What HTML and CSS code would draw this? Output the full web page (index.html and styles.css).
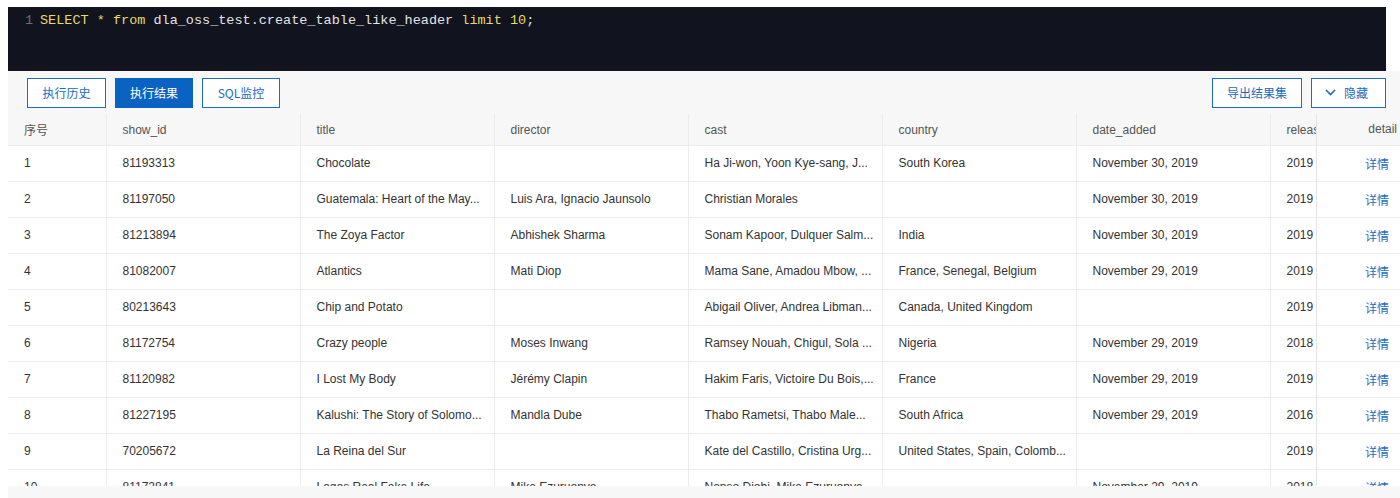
FILE: index.html
```html
<!DOCTYPE html>
<html>
<head>
<meta charset="utf-8">
<link rel="stylesheet" href="styles.css">
</head>
<body>
<div class="wrap">
  <div class="editor">
    <div class="line"><span class="ln">1</span><span class="kw">SELECT</span> <span class="kw">*</span> <span class="kw">from</span> dla_oss_test.create_table_like_header <span class="kw">limit</span> <span class="num">10</span>;</div>
  </div>
  <div class="panel">
    <div class="toolbar">
      <div class="tabs">
        <button class="btn w79">执行历史</button>
        <button class="btn w78 primary">执行结果</button>
        <button class="btn w78">SQL监控</button>
      </div>
      <div class="actions">
        <button class="btn w90">导出结果集</button>
        <button class="btn w75"><svg class="chev" width="11" height="7" viewBox="0 0 11 7"><path d="M1 1l4.5 4.5L10 1" fill="none" stroke="#1b6cc4" stroke-width="1.6"/></svg>隐藏</button>
      </div>
    </div>
    <div class="tablebox">
      <table class="grid">
        <colgroup>
          <col class="c-idx"><col class="c-w"><col class="c-w"><col class="c-w"><col class="c-w"><col class="c-w"><col class="c-w"><col class="c-rel"><col class="c-det">
        </colgroup>
        <thead>
          <tr><th>序号</th><th>show_id</th><th>title</th><th>director</th><th>cast</th><th>country</th><th>date_added</th><th class="rel">releas</th><th class="det">detail</th></tr>
        </thead>
        <tbody>
          <tr><td>1</td><td>81193313</td><td>Chocolate</td><td></td><td>Ha Ji-won, Yoon Kye-sang, J...</td><td>South Korea</td><td>November 30, 2019</td><td class="rel">2019</td><td class="det"><a>详情</a></td></tr>
          <tr><td>2</td><td>81197050</td><td>Guatemala: Heart of the May...</td><td>Luis Ara, Ignacio Jaunsolo</td><td>Christian Morales</td><td></td><td>November 30, 2019</td><td class="rel">2019</td><td class="det"><a>详情</a></td></tr>
          <tr><td>3</td><td>81213894</td><td>The Zoya Factor</td><td>Abhishek Sharma</td><td>Sonam Kapoor, Dulquer Salm...</td><td>India</td><td>November 30, 2019</td><td class="rel">2019</td><td class="det"><a>详情</a></td></tr>
          <tr><td>4</td><td>81082007</td><td>Atlantics</td><td>Mati Diop</td><td>Mama Sane, Amadou Mbow, ...</td><td>France, Senegal, Belgium</td><td>November 29, 2019</td><td class="rel">2019</td><td class="det"><a>详情</a></td></tr>
          <tr><td>5</td><td>80213643</td><td>Chip and Potato</td><td></td><td>Abigail Oliver, Andrea Libman...</td><td>Canada, United Kingdom</td><td></td><td class="rel">2019</td><td class="det"><a>详情</a></td></tr>
          <tr><td>6</td><td>81172754</td><td>Crazy people</td><td>Moses Inwang</td><td>Ramsey Nouah, Chigul, Sola ...</td><td>Nigeria</td><td>November 29, 2019</td><td class="rel">2018</td><td class="det"><a>详情</a></td></tr>
          <tr><td>7</td><td>81120982</td><td>I Lost My Body</td><td>Jérémy Clapin</td><td>Hakim Faris, Victoire Du Bois,...</td><td>France</td><td>November 29, 2019</td><td class="rel">2019</td><td class="det"><a>详情</a></td></tr>
          <tr><td>8</td><td>81227195</td><td>Kalushi: The Story of Solomo...</td><td>Mandla Dube</td><td>Thabo Rametsi, Thabo Male...</td><td>South Africa</td><td>November 29, 2019</td><td class="rel">2016</td><td class="det"><a>详情</a></td></tr>
          <tr><td>9</td><td>70205672</td><td>La Reina del Sur</td><td></td><td>Kate del Castillo, Cristina Urg...</td><td>United States, Spain, Colomb...</td><td></td><td class="rel">2019</td><td class="det"><a>详情</a></td></tr>
          <tr><td>10</td><td>81172841</td><td>Lagos Real Fake Life</td><td>Mike Ezuruonye</td><td>Nonso Diobi, Mike Ezuruonye...</td><td></td><td>November 29, 2019</td><td class="rel">2018</td><td class="det"><a>详情</a></td></tr>
        </tbody>
      </table>
    </div>
    <div class="footer"></div>
  </div>
</div>
</body>
</html>
```
FILE: styles.css
```css
* { box-sizing: border-box; }
html, body { margin: 0; padding: 0; background: #fff; }
body {
  width: 1400px;
  height: 498px;
  overflow: hidden;
  font-family: "Liberation Sans", "Noto Sans CJK SC", Arial, sans-serif;
  font-size: 12px;
  color: #333;
}
.wrap { padding: 7px 0 0 8px; }
.editor {
  width: 1378px;
  height: 64px;
  background: #11131e;
  padding: 6px 0 0 0;
}
.line {
  font-family: "Liberation Mono", "DejaVu Sans Mono", monospace;
  font-size: 13.5px;
  line-height: 16px;
  color: #e4e4e4;
  white-space: pre;
}
.ln { display: inline-block; width: 32px; padding-left: 17px; color: #6b6e78; }
.kw { color: #e8d96a; }
.num { color: #e8d96a; }
.panel { background: #f7f7f7; width: 1392px; }
.toolbar {
  height: 43px;
  padding: 7px 14px 0 19px;
  display: flex;
  justify-content: space-between;
  align-items: flex-start;
}
.tabs, .actions { display: flex; gap: 9px; }
.btn {
  height: 30px;
  border: 1px solid #1b6cc4;
  background: #fff;
  color: #1b6cc4;
  font-family: "Noto Sans CJK SC", "Liberation Sans", sans-serif;
  font-size: 12px;
  padding: 0 0 1px 0;
  display: flex;
  align-items: center;
  justify-content: center;
  gap: 8px;
}
.btn.primary { background: #0a63c3; border-color: #0a63c3; color: #fff; }
.w79 { width: 79px; } .w78 { width: 78px; } .w90 { width: 90px; } .w75 { width: 75px; }
.chev { margin-left: -4px; }
.tablebox { height: 372px; overflow: hidden; background: #fff; }
.grid { border-collapse: collapse; table-layout: fixed; width: 1392px; }
.c-idx { width: 98px; } .c-w { width: 194px; } .c-rel { width: 46px; } .c-det { width: 84px; }
th, td {
  text-align: left;
  padding: 0 0 0 16px;
  white-space: nowrap;
  overflow: hidden;
  border-right: 1px solid #ececec;
  font-weight: normal;
}
th {
  height: 31px;
  padding-top: 1px;
  background: #f7f7f7;
  color: #555;
  border-bottom: 1px solid #ececec;
}
td {
  height: 36px;
  border-bottom: 1px solid #ededed;
  color: #333;
}
.rel { border-right: none; text-overflow: clip; }
.det {
  text-align: right;
  padding: 0 3px 0 0;
  border-right: none;
  border-left: 1px solid #e4e4e4;
  box-shadow: -4px 0 5px -2px rgba(0,0,0,0.12);
}
td.det { padding-right: 11px; }
.det a {
  color: #1b6cc4;
  font-family: "Noto Sans CJK SC", sans-serif;
}
th:first-child, td:first-child { padding-left: 16px; }
.footer { height: 12px; background: #f7f7f7; }
```
